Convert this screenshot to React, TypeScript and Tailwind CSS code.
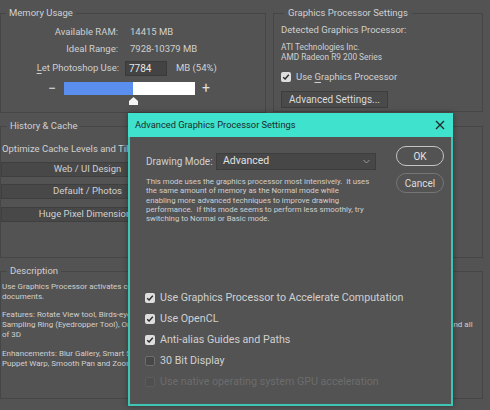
import React from "react";

const Check = ({ state }: { state: "on" | "off" | "disabled" }) => {
  if (state === "on")
    return (
      <span className="flex h-[10px] w-[10px] shrink-0 items-center justify-center rounded-[2px] bg-[#dedede]">
        <svg width="8" height="8" viewBox="0 0 8 8">
          <path d="M1.2 4.2 L3.1 6 L6.8 1.8" fill="none" stroke="#2a2a2a" strokeWidth="1.4" />
        </svg>
      </span>
    );
  if (state === "off")
    return <span className="h-[10px] w-[10px] shrink-0 rounded-[2px] border border-[#6e6e6e] bg-[#474747]" />;
  return <span className="h-[10px] w-[10px] shrink-0 rounded-[2px] border border-[#5c5c5c] bg-[#4f4f4f]" />;
};

export default function App() {
  return (
    <div className="relative h-[410px] w-[490px] overflow-hidden bg-[#535353] font-[family-name:Roboto,sans-serif] text-[#d0d0d0]">
      {/* Row 1 */}
      <div className="flex gap-[7px] pt-[6px]">
        <fieldset className="h-[107px] w-[266px] border border-[#464646]">
          <legend className="ml-[5px] px-[3px] text-[9.5px] leading-[14px]">Memory Usage</legend>
          <div className="mt-[5px] flex h-[14px] items-center text-[9.5px]">
            <span className="w-[117px] text-right">Available RAM:</span>
            <span className="ml-[12px]">14415 MB</span>
          </div>
          <div className="mt-[3px] flex h-[14px] items-center text-[9.5px]">
            <span className="w-[117px] text-right">Ideal Range:</span>
            <span className="ml-[12px]">7928-10379 MB</span>
          </div>
          <div className="mt-[5px] flex h-[14px] items-center text-[9.5px]">
            <span className="w-[118px] text-right">
              <span className="underline underline-offset-2">L</span>et Photoshop Use:
            </span>
            <span className="ml-[6px] flex h-[15px] w-[42px] items-center border border-[#3a3a3a] bg-[#434343] pl-[3px] text-[10px] text-[#e6e6e6]">
              7784
            </span>
            <span className="ml-[9px]">MB (54%)</span>
          </div>
          <div className="mt-[7px] flex h-[13px] items-center pl-[43px]">
            <span className="w-[16px] text-center text-[14px] leading-[13px] text-[#e0e0e0]">−</span>
            <div className="relative ml-[4px] flex h-[13px] w-[131px]">
              <div className="h-full w-[69px] bg-[#5a8ff0]" />
              <div className="h-full flex-1 bg-white" />
              <svg className="absolute left-[64px] top-[15px]" width="11" height="8" viewBox="0 0 11 8">
                <path d="M5.5 0 L10 4 L10 8 L1 8 L1 4 Z" fill="#f4f4f4" />
              </svg>
            </div>
            <span className="ml-[3px] w-[16px] text-center text-[14px] leading-[13px] text-[#e0e0e0]">+</span>
          </div>
        </fieldset>
        <fieldset className="h-[106px] w-[210px] border border-[#464646]">
          <legend className="ml-[10px] px-[4px] text-[9.5px] leading-[14px]">Graphics Processor Settings</legend>
          <div className="pl-[7px]">
            <div className="mt-[3px] h-[14px] text-[9.5px] leading-[14px]">Detected Graphics Processor:</div>
            <div className="mt-[5px] text-[8.3px] leading-[10px]">
              ATI Technologies Inc.
              <br />
              AMD Radeon R9 200 Series
            </div>
            <div className="mt-[8px] flex h-[14px] items-center gap-[5px] text-[9.5px]">
              <Check state="on" />
              <span>
                Use <span className="underline underline-offset-2">G</span>raphics Processor
              </span>
            </div>
            <div className="mt-[7px] flex h-[17px] w-[107px] items-center justify-center border border-[#3d3d3d] bg-[#4a4a4a] text-[10px] text-[#dadada]">
              Advanced Settings...
            </div>
          </div>
        </fieldset>
      </div>

      {/* Row 2 */}
      <fieldset className="mt-[6px] h-[139px] w-[483px] overflow-hidden border border-[#464646]">
        <legend className="ml-[6px] px-[3px] text-[9.5px] leading-[14px]">History &amp; Cache</legend>
        <div className="mt-[9px] h-[14px] whitespace-nowrap pl-[1px] text-[9.5px] leading-[14px]">
          Optimize Cache Levels and Tile Size for:
        </div>
        <div className="mt-[6px] flex h-[15px] w-[173px] items-center justify-center border border-[#3f3f3f] bg-[#484848] text-[9.5px]">
          Web / UI Design
        </div>
        <div className="mt-[7px] flex h-[15px] w-[173px] items-center justify-center border border-[#3f3f3f] bg-[#484848] text-[9.5px]">
          Default / Photos
        </div>
        <div className="mt-[8px] flex h-[15px] w-[173px] items-center justify-center border border-[#3f3f3f] bg-[#484848] text-[9.5px]">
          Huge Pixel Dimensions
        </div>
      </fieldset>

      {/* Row 3 */}
      <fieldset className="mt-[6px] h-[135px] w-[483px] overflow-hidden border border-[#464646]">
        <legend className="ml-[6px] px-[3px] text-[9.5px] leading-[14px]">Description</legend>
        <div className="mt-[4px] whitespace-nowrap pl-[1px] text-[8px] leading-[10px]">
          <p>
            Use Graphics Processor activates certain features and interface enhancements. It does not enable OpenGL on already open
            <br />
            documents.
          </p>
          <p className="mt-[8px]">
            Features: Rotate View tool, Birds-eye Zoom, Flick Panning, Scrubby Zoom, HUD Color Picker and Rich Cursor info,
            <br />
            Sampling Ring (Eyedropper Tool), On-Canvas Brush Resizing, Bristle Tip Preview, Adaptive Wide Angle, Lighting Effects Gallery, and all
            <br />
            of 3D
          </p>
          <p className="mt-[9px]">
            Enhancements: Blur Gallery, Smart Sharpen, Liquify, Select Focus Area, Perspective Warp, Image Size,
            <br />
            Puppet Warp, Smooth Pan and Zoom, Drop Shadow for Canvas Border, Painting Performance, Transform/Warp
          </p>
        </div>
      </fieldset>

      {/* Dialog overlay */}
      <div className="absolute left-[128px] top-[113px] flex h-[293px] w-[325px] flex-col border-x-2 border-b-2 border-[#3cc6b3] bg-[#535353] shadow-[0_0_6px_rgba(0,0,0,0.35)]">
        <div className="-mx-[2px] flex h-[24px] shrink-0 items-center justify-between bg-[#3ee2cd] pl-[7px] pr-[8px]">
          <span className="text-[9.3px] text-[#1d2b29]">Advanced Graphics Processor Settings</span>
          <svg width="10" height="10" viewBox="0 0 10 10">
            <path d="M1 1 L9 9 M9 1 L1 9" stroke="#1f2a28" strokeWidth="1.3" />
          </svg>
        </div>
        <div className="flex flex-1 flex-col">
          <div className="flex">
            <div className="pl-[16px] pt-[16px]">
              <div className="flex h-[16px] items-center text-[10px]">
                <span className="w-[70px] whitespace-nowrap">Drawing Mode:</span>
                <div className="flex h-[17px] w-[160px] items-center justify-between border border-[#3d3d3d] bg-[#474747] pl-[6px] pr-[5px] text-[10.5px] text-[#e0e0e0]">
                  <span>Advanced</span>
                  <svg width="7" height="5" viewBox="0 0 7 5">
                    <path d="M0.5 1 L3.5 4 L6.5 1" fill="none" stroke="#9a9a9a" strokeWidth="1" />
                  </svg>
                </div>
              </div>
              <p className="mt-[8px] whitespace-nowrap text-[7.8px] leading-[9.3px] text-[#cfcfcf]">
                This mode uses the graphics processor most intensively.&nbsp; It uses
                <br />
                the same amount of memory as the Normal mode while
                <br />
                enabling more advanced techniques to improve drawing
                <br />
                performance.&nbsp; If this mode seems to perform less smoothly, try
                <br />
                switching to Normal or Basic mode.
              </p>
            </div>
            <div className="ml-auto flex flex-col gap-[7px] pr-[7px] pt-[9px]">
              <div className="flex h-[20px] w-[48px] items-center justify-center rounded-full border-[1.5px] border-[#c4c4c4] text-[10px] text-[#e2e2e2]">
                OK
              </div>
              <div className="flex h-[20px] w-[48px] items-center justify-center rounded-full border-[1.5px] border-[#767676] text-[10px] text-[#dcdcdc]">
                Cancel
              </div>
            </div>
          </div>
          <div className="mt-auto flex flex-col gap-[7px] pb-[15px] pl-[15px] text-[10.7px]">
            <div className="flex h-[14px] items-center gap-[5px]">
              <Check state="on" />
              <span>Use Graphics Processor to Accelerate Computation</span>
            </div>
            <div className="flex h-[14px] items-center gap-[5px]">
              <Check state="on" />
              <span>Use OpenCL</span>
            </div>
            <div className="flex h-[14px] items-center gap-[5px]">
              <Check state="on" />
              <span>Anti-alias Guides and Paths</span>
            </div>
            <div className="flex h-[14px] items-center gap-[5px]">
              <Check state="off" />
              <span>30 Bit Display</span>
            </div>
            <div className="flex h-[14px] items-center gap-[5px] text-[#6c6c6c]">
              <Check state="disabled" />
              <span>Use native operating system GPU acceleration</span>
            </div>
          </div>
        </div>
      </div>
    </div>
  );
}
